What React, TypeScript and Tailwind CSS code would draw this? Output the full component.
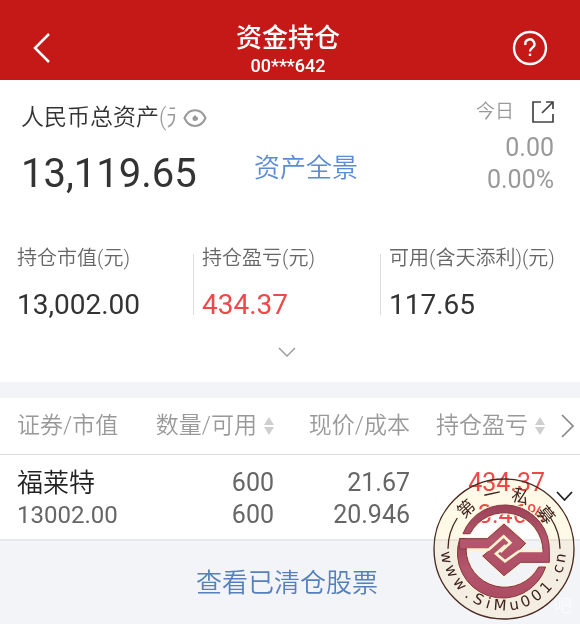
function Stat({ label, value, red }: { label: string; value: string; red?: boolean }) {
  return (
    <div>
      <dt className="text-[20px] leading-6 font-[350] whitespace-nowrap text-[#666]">{label}</dt>
      <dd className={red ? "mt-[17px] text-[28px] leading-9 text-[#f04848]" : "mt-[17px] text-[28px] leading-9 text-[#333]"}>{value}</dd>
    </div>
  );
}

function SortArrows() {
  return (
    <svg width="10" height="20" viewBox="0 0 10 20" fill="#cfcfcf" aria-hidden="true">
      <path d="M5 1L10 9H0Z" />
      <path d="M5 19L10 11H0Z" />
    </svg>
  );
}

const cx = 235;
const cy = 253;
const motto: [string, number, number][] = [
  ["第", 121, 131],
  ["一", 199, 88],
  ["私", 285, 95],
  ["募", 361, 150],
];
const site: [string, number, number][] = [
  ["w", 62, 278],
  ["w", 77, 319],
  ["w", 102, 358],
  [".", 129, 388],
  ["S", 158, 405],
  ["i", 188, 417],
  ["M", 223, 423],
  ["u", 265, 421],
  ["0", 300, 411],
  ["0", 333, 393],
  ["1", 362, 369],
  [".", 385, 341],
  ["c", 398, 312],
  ["n", 405, 280],
];
const deg = 180 / Math.PI;

const upperHalf =
  "M112 207A134 134 0 0 1 371 261V293H285L235 333L171 274L197 253H102V222H185L235 178L300 236L275 261H352A116 116 0 0 0 133 207Z";
const lowerHalf = "M102 222A134 134 0 0 0 360 307H339A116 116 0 0 1 121 253V222Z";

function Seal() {
  return (
    <svg className="block size-[142px]" viewBox="22 40 426 426" role="img" aria-label="第一私募 www.SiMu001.cn">
      <defs>
        <linearGradient id="plum" x1="0" y1="0" x2="0" y2="1">
          <stop offset="0" stopColor="#9c4257" />
          <stop offset="0.5" stopColor="#b4566c" />
          <stop offset="1" stopColor="#ad4d63" />
        </linearGradient>
      </defs>
      <circle cx={cx} cy={cy} r="210" fill="none" stroke="#4a2a20" strokeWidth="4" />
      <path d="M67 252A168 168 0 0 1 95 160M375 160A168 168 0 0 1 403 252" fill="none" stroke="#4a2a20" strokeWidth="4" />
      <g stroke="#fff3d0" strokeWidth="9" fill="none" strokeLinejoin="round">
        <path d={lowerHalf} />
        <path d={upperHalf} />
      </g>
      <g fill="url(#plum)" stroke="#84384b" strokeWidth="3">
        <path d={lowerHalf} />
        <path d={upperHalf} />
      </g>
      <path d="M104 224H123V251H104Z" fill="#b4566c" />
      <g fill="none" stroke="#fff3d0" strokeWidth="8">
        <path d="M124 255H189L234 215L254 234L224 262" />
        <path d="M350 259H281L238 290L211 267L240 242" />
      </g>
      <g fill="#3f241c" textAnchor="middle" className="font-['Noto_Sans_CJK_SC',sans-serif]" fontSize="52">
        {motto.map(([ch, x, y]) => (
          <text key={ch} transform={`translate(${x} ${y}) rotate(${Math.atan2(x - cx, cy - y) * deg})`} y="19">
            {ch}
          </text>
        ))}
      </g>
      <g fill="#3f241c" textAnchor="middle" className="font-['DejaVu_Sans',sans-serif]" fontSize="45">
        {site.map(([ch, x, y], i) => (
          <text key={i} transform={`translate(${x} ${y}) rotate(${Math.atan2(cx - x, y - cy) * deg})`} y="14">
            {ch}
          </text>
        ))}
      </g>
    </svg>
  );
}

export default function App() {
  return (
    <div className="relative min-h-screen bg-[#f3f4f8] font-[Roboto,'Noto_Sans_CJK_SC',sans-serif] text-[#333]">
      <header className="flex h-20 items-center justify-between bg-[#c51918] pt-4 pr-8 pl-6 text-white">
        <button aria-label="返回" className="flex size-9 items-center justify-center">
          <svg width="20" height="32" viewBox="0 0 20 32" fill="none" stroke="currentColor" strokeWidth="2.5">
            <path d="M17 2L3 16L17 30" />
          </svg>
        </button>
        <div className="pt-1 pl-1 text-center">
          <h1 className="text-[26px] leading-8 font-medium">资金持仓</h1>
          <p className="text-[18px] leading-6 font-medium">00***642</p>
        </div>
        <button aria-label="帮助" className="flex size-9 items-center justify-center">
          <svg width="36" height="36" viewBox="0 0 36 36" fill="none" stroke="currentColor" strokeWidth="2.4">
            <circle cx="18" cy="18" r="16" />
            <path d="M13.500 15A4.500 4.500 0 1 1 20.500 17.600C18.600 19 18 19.600 18 21.600" />
            <path d="M18 23.600V26" />
          </svg>
        </button>
      </header>

      <section className="bg-white pb-6">
        <div className="grid grid-cols-[233fr_200fr_100fr] pt-5 pr-[26px] pl-[21px]">
          <div>
            <div className="flex items-center gap-2">
              <h2 className="w-[154px] overflow-hidden text-[23px] leading-9 font-[350] whitespace-nowrap">
                人民币总资产<span className="text-[#999]">(元)</span>
              </h2>
              <button aria-label="隐藏金额">
                <svg width="24" height="20" viewBox="0 0 24 20" fill="none" stroke="#999" strokeWidth="2">
                  <path d="M1.500 10C6 -0.500 18 -0.500 22.500 10C18 20.500 6 20.500 1.500 10Z" />
                  <path d="M12 7.500V10.500H15" />
                  <circle cx="12" cy="10.500" r="1.500" fill="#999" />
                </svg>
              </button>
            </div>
            <p className="mt-[14px] text-[40px] leading-[48px]">13,119.65</p>
          </div>
          <a href="#panorama" className="mt-12 w-fit text-[26px] leading-10 font-[350] text-[#5b8bd8]">资产全景</a>
          <div className="text-right text-[#999]">
            <div className="flex items-center justify-end gap-[18px]">
              <span className="text-[19px] leading-6 font-[350]">今日</span>
              <button aria-label="查看今日收益">
                <svg width="22" height="22" viewBox="0 0 22 22" fill="none" stroke="#444" strokeWidth="1.700">
                  <path d="M9 1H1V21H21V13" />
                  <path d="M14 1H21V8M21 1L10 12" />
                </svg>
              </button>
            </div>
            <p className="mt-2 text-[25px] leading-8">0.00</p>
            <p className="text-[25px] leading-8">0.00%</p>
          </div>
        </div>

        <dl className="mt-12 grid grid-cols-[176fr_187fr_200fr] pl-[17px]">
          <Stat label="持仓市值(元)" value="13,002.00" />
          <div className="my-2 border-l border-[#ddd] pl-2">
            <div className="-my-2"><Stat label="持仓盈亏(元)" value="434.37" red /></div>
          </div>
          <div className="my-2 border-l border-[#ddd] pl-2">
            <div className="-my-2"><Stat label="可用(含天添利)(元)" value="117.65" /></div>
          </div>
        </dl>
        <div className="flex justify-center pt-6 pr-[6px]">
          <button aria-label="展开">
            <svg width="18" height="11" viewBox="0 0 18 11" fill="none" stroke="#999" strokeWidth="1.400">
              <path d="M1 1L9 9L17 1" />
            </svg>
          </button>
        </div>
      </section>

      <table className="mt-4 w-full table-fixed bg-white text-right text-[25px] leading-8 text-[#666]">
        <colgroup>
          <col />
          <col className="w-[146px]" />
          <col className="w-[136px]" />
          <col className="w-[135px]" />
          <col className="w-[35px]" />
        </colgroup>
        <thead className="text-[23px] whitespace-nowrap text-[#999]">
          <tr className="h-14 border-b border-[#ddd]">
            <th className="pl-[17px] text-left font-[350]">证券/市值</th>
            <th className="font-[350]">
              <button className="inline-flex items-center gap-[7px]">数量/可用<SortArrows /></button>
            </th>
            <th className="font-[350]">现价/成本</th>
            <th className="font-[350]">
              <button className="inline-flex items-center gap-[7px]">持仓盈亏<SortArrows /></button>
            </th>
            <th>
              <button aria-label="更多列" className="block pl-4">
                <svg width="14" height="24" viewBox="0 0 14 24" fill="none" stroke="#888" strokeWidth="1.700">
                  <path d="M1 1L12 12L1 23" />
                </svg>
              </button>
            </th>
          </tr>
        </thead>
        <tbody>
          <tr className="h-[86px] border-b-2 border-[#e8e9ec]">
            <td className="pt-1 pl-[17px] text-left">
              <div className="text-[26px] font-[350] text-[#222]">福莱特</div>
              <div className="text-[24px]">13002.00</div>
            </td>
            <td className="pt-1"><div>600</div><div>600</div></td>
            <td className="pt-1"><div>21.67</div><div>20.946</div></td>
            <td className="pt-1 text-[#f04848]"><div>434.37</div><div>3.46%</div></td>
            <td>
              <button aria-label="展开持仓" className="block pl-[11px]">
                <svg width="17" height="11" viewBox="0 0 17 11" fill="none" stroke="#222" strokeWidth="1.800">
                  <path d="M1 1L8.500 9L16 1" />
                </svg>
              </button>
            </td>
          </tr>
        </tbody>
      </table>

      <div className="flex justify-center pt-6 pr-[6px]">
        <a href="#closed" className="text-[26px] leading-9 font-[350] text-[#5480bd]">查看已清仓股票</a>
      </div>

      <span className="absolute right-2 bottom-1 text-[18px] leading-7 text-white/60">吧</span>
      <div className="pointer-events-none absolute right-[6px] bottom-[5px] size-[140px] rounded-full bg-[radial-gradient(circle,#fefefe_0,#fefefe_44px,#fff9e8_45px)] mix-blend-multiply" />
      <div className="pointer-events-none absolute right-[5px] bottom-[4px]">
        <Seal />
      </div>
    </div>
  );
}
